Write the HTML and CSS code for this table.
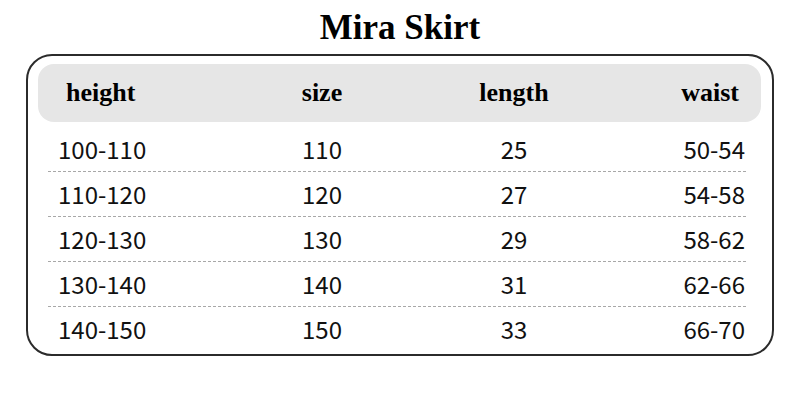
FILE: index.html
```html
<!DOCTYPE html>
<html>
<head>
<meta charset="utf-8">
<link rel="stylesheet" href="styles.css">
</head>
<body>
<h1 class="title">Mira Skirt</h1>
<div class="card">
  <div class="head">
    <span class="c1">height</span>
    <span class="c2">size</span>
    <span class="c3">length</span>
    <span class="c4">waist</span>
  </div>
  <div class="rows">
    <div class="row"><span class="c1">100-110</span><span class="c2">110</span><span class="c3">25</span><span class="c4">50-54</span></div>
    <div class="row"><span class="c1">110-120</span><span class="c2">120</span><span class="c3">27</span><span class="c4">54-58</span></div>
    <div class="row"><span class="c1">120-130</span><span class="c2">130</span><span class="c3">29</span><span class="c4">58-62</span></div>
    <div class="row"><span class="c1">130-140</span><span class="c2">140</span><span class="c3">31</span><span class="c4">62-66</span></div>
    <div class="row last"><span class="c1">140-150</span><span class="c2">150</span><span class="c3">33</span><span class="c4">66-70</span></div>
  </div>
</div>
</body>
</html>
```

FILE: styles.css
```css
html, body {
  margin: 0;
  padding: 0;
  background: #fff;
}
body {
  width: 800px;
  height: 402px;
  overflow: hidden;
}
.title {
  margin: 0;
  height: 54px;
  line-height: 56px;
  text-align: center;
  font-family: "Liberation Serif", serif;
  font-weight: bold;
  font-size: 35px;
  color: #000;
}
.card {
  margin: 0 26px;
  border: 2px solid #2b2b2b;
  border-radius: 26px;
  padding: 8px 11px 1px 10px;
  height: 289px;
  box-sizing: content-box;
}
.head {
  height: 58px;
  background: #e6e6e6;
  border-radius: 16px;
  display: flex;
  align-items: center;
  font-family: "Liberation Serif", serif;
  font-weight: bold;
  font-size: 26px;
  color: #000;
}
.head .c1 { width: 188px; padding-left: 28px; box-sizing: border-box; }
.head .c2 { width: 192px; text-align: center; }
.head .c3 { width: 192px; text-align: center; }
.head .c4 { flex: 1; text-align: right; padding-right: 22px; }
.rows {
  margin: 5px 13px 0 10px;
}
.row {
  height: 45px;
  box-sizing: border-box;
  background-image: repeating-linear-gradient(to right, #a8a8a8 0, #a8a8a8 3px, transparent 3px, transparent 5px);
  background-size: 100% 1px;
  background-repeat: no-repeat;
  background-position: left bottom;
  display: flex;
  align-items: center;
  font-family: "Noto Sans CJK SC", "Liberation Sans", sans-serif;
  font-size: 24px;
  color: #111;
  padding-bottom: 3px;
}
.row.last { background-image: none; }
.row .c1 { width: 178px; padding-left: 10px; box-sizing: border-box; }
.row .c2 { width: 192px; text-align: center; }
.row .c3 { width: 192px; text-align: center; }
.row .c4 { flex: 1; text-align: right; padding-right: 3px; }
```
